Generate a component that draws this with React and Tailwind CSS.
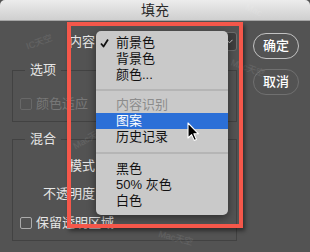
import React from 'react';

const Check = () => (
  <svg width="9" height="9" viewBox="0 0 9 9" className="absolute left-[4px] top-[4px]">
    <polyline points="1,4.5 3.5,7.5 8,0.5" fill="none" stroke="#111" strokeWidth="1.8" strokeLinejoin="round" />
  </svg>
);

function MenuItem({ label, checked, disabled, active }) {
  return (
    <div
      className={
        'relative h-[16px] flex items-center pl-[20px] ' +
        (active ? 'bg-[#2b6fd7] text-white' : disabled ? 'text-[#8c8c8c]' : 'text-[#111]')
      }
    >
      {checked && <Check />}
      <span>{label}</span>
    </div>
  );
}

function Checkbox({ label, disabled }) {
  return (
    <div className="h-[16px] flex items-center gap-[4px]">
      <span
        className={
          'w-[12px] h-[12px] rounded-[2px] border ' +
          (disabled ? 'border-[#686868]' : 'border-[#ababab]')
        }
      />
      <span className={disabled ? 'text-[#777]' : ''}>{label}</span>
    </div>
  );
}

// faint "Mac天空" watermarks scattered over the shot
const marks = [
  { cls: 'left-[26px] top-[36px] -rotate-[20deg]', text: 'IC天空' },
  { cls: 'left-[245px] top-[4px] rotate-[25deg]', text: 'Mac' },
  { cls: 'left-[230px] top-[62px] rotate-[20deg]', text: 'Mac天空' },
  { cls: 'left-[72px] top-[132px] -rotate-[30deg]', text: 'Mac天空' },
  { cls: 'left-[180px] top-[176px] rotate-[25deg]', text: 'Mac天空' },
  { cls: 'left-[158px] top-[232px] rotate-[15deg]', text: 'Mac天空' },
];

export default function App() {
  return (
    <div className="relative w-[310px] h-[252px] overflow-hidden bg-[#535353] font-['Liberation_Sans','Noto_Sans_CJK_SC',sans-serif] text-[13px] text-[#e6e6e6]">
      {/* title bar */}
      <div className="h-[21px] flex items-center justify-center rounded-t-[5px] border-b border-[#a5a5a5] bg-gradient-to-b from-[#ececec] to-[#cfcfcf] text-[14px] text-[#2a2a2a]">
        填充
      </div>

      <div className="flex pl-[12px]">
        {/* form */}
        <div className="w-[225px]">
          <div className="mt-[11px] h-[19px] flex items-center">
            <span className="w-[83px] text-right">内容</span>
            <div className="ml-[3px] w-[139px] h-[19px] rounded-[3px] border border-[#6d6d6d] bg-[#3f3f3f] flex items-center justify-end pr-[3px]">
              <svg width="7" height="5" viewBox="0 0 7 5">
                <polyline points="0.5,0.8 3.5,3.8 6.5,0.8" fill="none" stroke="#cfcfcf" strokeWidth="1" />
              </svg>
            </div>
          </div>

          <fieldset className="mt-[11px] border border-[#424242] pl-[7px] pt-[18px] pb-[9px]">
            <legend className="ml-[5px] px-[5px] leading-[16px]">选项</legend>
            <Checkbox label="颜色适应" disabled />
          </fieldset>

          <fieldset className="mt-[9px] border border-[#424242] pl-[7px] pt-[9px] pb-[9px]">
            <legend className="ml-[5px] px-[5px] leading-[16px]">混合</legend>
            <div className="h-[20px] flex items-center">
              <span className="w-[75px] text-right">模式</span>
            </div>
            <div className="mt-[8px] h-[20px] flex items-center">
              <span className="w-[75px] text-right">不透明度</span>
            </div>
            <div className="mt-[11px]">
              <Checkbox label="保留透明区域" />
            </div>
          </fieldset>
        </div>

        {/* buttons */}
        <div className="ml-[16px] pt-[12px] flex flex-col gap-[10px]">
          <button className="w-[46px] h-[26px] rounded-full border border-[#c2c2c2] text-white font-medium">
            确定
          </button>
          <button className="w-[46px] h-[26px] rounded-full border border-[#707070] text-white font-medium">
            取消
          </button>
        </div>
      </div>

      {marks.map((m, i) => (
        <span key={i} className={'absolute text-[9px] text-white/10 pointer-events-none ' + m.cls}>
          {m.text}
        </span>
      ))}

      {/* dropdown menu */}
      <div className="absolute left-[96px] top-[31px] w-[132px] h-[184px] rounded-[5px] bg-[#c9c9c9] pt-[4px] shadow-[0_3px_8px_rgba(0,0,0,0.45)] text-[13px]">
        <MenuItem label="前景色" checked />
        <MenuItem label="背景色" />
        <MenuItem label="颜色..." />
        <div className="h-[14px] flex items-center">
          <div className="w-full h-[2px] bg-[#b5b5b5]" />
        </div>
        <MenuItem label="内容识别" disabled />
        <MenuItem label="图案" active />
        <MenuItem label="历史记录" />
        <div className="h-[16px] flex items-center">
          <div className="w-full h-[2px] bg-[#b5b5b5]" />
        </div>
        <MenuItem label="黑色" />
        <MenuItem label="50% 灰色" />
        <MenuItem label="白色" />
      </div>

      {/* mouse pointer */}
      <svg width="13" height="20" viewBox="0 0 13 20" className="absolute left-[187px] top-[122px]">
        <path d="M1 1 L1 16 L4.6 12.6 L7.2 18.4 L9.4 17.4 L6.9 11.8 L11.6 11.8 Z" fill="#000" stroke="#fff" strokeWidth="1.1" strokeLinejoin="round" />
      </svg>

      {/* red highlight frame */}
      <div className="absolute left-[67px] top-[22px] w-[176px] h-[206px] border-4 border-[#f5574a] shadow-[2px_3px_4px_rgba(0,0,0,0.45)]" />
    </div>
  );
}
